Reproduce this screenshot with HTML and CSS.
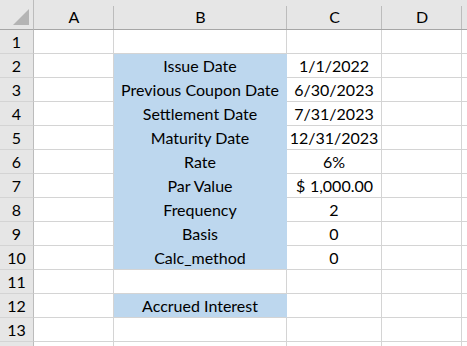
FILE: index.html
```html
<!DOCTYPE html>
<html lang="en">
  <head>
    <meta charset="UTF-8" />
    <title>Accrued Interest</title>
    <link rel="stylesheet" href="styles.css">
  </head>
  <body>
    <div class="sheet">
      <div class="corner"><span class="corner-triangle"></span></div>
      <div class="col-head">A</div>
      <div class="col-head">B</div>
      <div class="col-head">C</div>
      <div class="col-head">D</div>
      <div class="col-head last"></div>

      <div class="row-head">1</div><div class="cell"></div><div class="cell"></div><div class="cell"></div><div class="cell"></div><div class="cell last"></div>
      <div class="row-head">2</div><div class="cell"></div><div class="cell label">Issue Date</div><div class="cell">1/1/2022</div><div class="cell"></div><div class="cell last"></div>
      <div class="row-head">3</div><div class="cell"></div><div class="cell label">Previous Coupon Date</div><div class="cell">6/30/2023</div><div class="cell"></div><div class="cell last"></div>
      <div class="row-head">4</div><div class="cell"></div><div class="cell label">Settlement Date</div><div class="cell">7/31/2023</div><div class="cell"></div><div class="cell last"></div>
      <div class="row-head">5</div><div class="cell"></div><div class="cell label">Maturity Date</div><div class="cell">12/31/2023</div><div class="cell"></div><div class="cell last"></div>
      <div class="row-head">6</div><div class="cell"></div><div class="cell label">Rate</div><div class="cell">6%</div><div class="cell"></div><div class="cell last"></div>
      <div class="row-head">7</div><div class="cell"></div><div class="cell label">Par Value</div><div class="cell money"><span>$</span><span>1,000.00</span></div><div class="cell"></div><div class="cell last"></div>
      <div class="row-head">8</div><div class="cell"></div><div class="cell label">Frequency</div><div class="cell">2</div><div class="cell"></div><div class="cell last"></div>
      <div class="row-head">9</div><div class="cell"></div><div class="cell label">Basis</div><div class="cell">0</div><div class="cell"></div><div class="cell last"></div>
      <div class="row-head">10</div><div class="cell"></div><div class="cell label label-end">Calc_method</div><div class="cell">0</div><div class="cell"></div><div class="cell last"></div>
      <div class="row-head">11</div><div class="cell"></div><div class="cell"></div><div class="cell"></div><div class="cell"></div><div class="cell last"></div>
      <div class="row-head">12</div><div class="cell"></div><div class="cell label label-end">Accrued Interest</div><div class="cell"></div><div class="cell"></div><div class="cell last"></div>
      <div class="row-head">13</div><div class="cell"></div><div class="cell"></div><div class="cell"></div><div class="cell"></div><div class="cell last"></div>
      <div class="row-head"></div><div class="cell"></div><div class="cell"></div><div class="cell"></div><div class="cell"></div><div class="cell last"></div>
    </div>
  </body>
</html>
```

FILE: styles.css
```css
body {
  margin: 0;
  background: #fff;
  font-family: Lato, "Liberation Sans", sans-serif;
  font-size: 16px;
  color: #000;
  overflow: hidden;
}
.sheet {
  display: grid;
  grid-template-columns: 34px 80px 173px 95px 80px 40px;
  grid-template-rows: 30px repeat(14, 24px);
  width: 467px;
  height: 346px;
  overflow: hidden;
}
.corner,
.col-head,
.row-head {
  background-color: #e6e6e6;
  box-sizing: border-box;
  display: flex;
  align-items: flex-end;
  justify-content: center;
}
.corner {
  position: relative;
  border-right: 1px solid #bcbcbc;
  border-bottom: 1px solid #a6a6a6;
}
.corner-triangle {
  position: absolute;
  right: 4px;
  bottom: 4px;
  width: 0;
  height: 0;
  border-left: 16px solid transparent;
  border-bottom: 16px solid #b4b4b4;
}
.col-head {
  padding-bottom: 3px;
  border-bottom: 1px solid #a6a6a6;
  background-image: linear-gradient(#bcbcbc, #bcbcbc);
  background-size: 1px 23px;
  background-position: right bottom;
  background-repeat: no-repeat;
}
.row-head {
  padding-bottom: 2px;
  border-right: 1px solid #bcbcbc;
  border-bottom: 1px solid #d4d4d4;
}
.cell {
  box-sizing: border-box;
  border-right: 1px solid #d4d4d4;
  border-bottom: 1px solid #d4d4d4;
  display: flex;
  align-items: flex-end;
  justify-content: center;
  padding-bottom: 2px;
  white-space: nowrap;
}
.cell.label {
  background-color: #bdd7ee;
  border-color: #bdd7ee;
}
.cell.label-end {
  border-bottom-color: #d4d4d4;
}
.cell.money {
  justify-content: space-between;
  padding-left: 9px;
  padding-right: 8px;
}
```
